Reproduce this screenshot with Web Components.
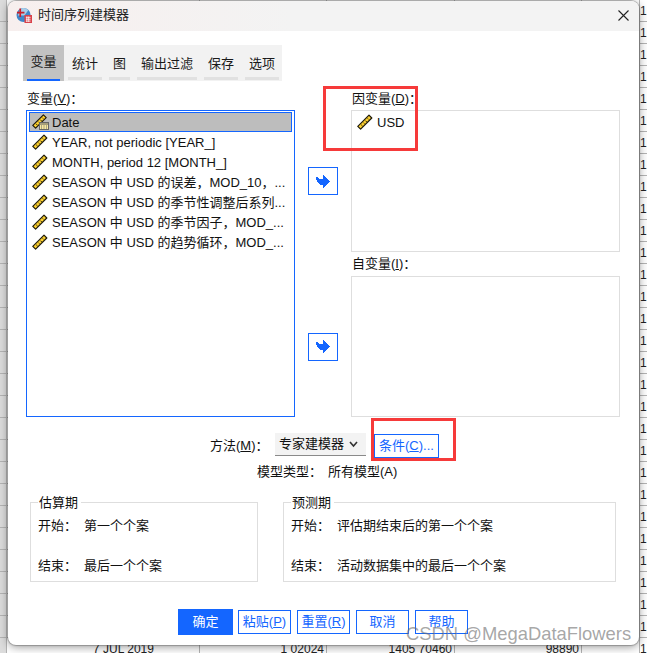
<!DOCTYPE html>
<html lang="zh">
<head>
<meta charset="utf-8">
<title>时间序列建模器</title>
<style>
html,body{margin:0;padding:0;background:#fff;}
body{width:647px;height:653px;overflow:hidden;font:13px/1.2 "Liberation Sans","Noto Sans CJK SC",sans-serif;color:#111;}
</style>
</head>
<body>
<ui-stage>
  <sheet-bg></sheet-bg>
  <dialog-window title-text="时间序列建模器">
    <tab-bar>
      <tab-item active>变量</tab-item><tab-item w="41">统计</tab-item><tab-item w="28">图</tab-item><tab-item w="67">输出过滤</tab-item><tab-item w="41">保存</tab-item><tab-item w="41">选项</tab-item>
    </tab-bar>
    <var-panel>
      <field-label slot="l1">变量(<u>V</u>)：</field-label>
      <list-box slot="list" focus>
        <var-item selected kind="date">Date</var-item>
        <var-item>YEAR, not periodic [YEAR_]</var-item>
        <var-item>MONTH, period 12 [MONTH_]</var-item>
        <var-item>SEASON 中 USD 的误差，MOD_10，...</var-item>
        <var-item>SEASON 中 USD 的季节性调整后系列...</var-item>
        <var-item>SEASON 中 USD 的季节因子，MOD_...</var-item>
        <var-item>SEASON 中 USD 的趋势循环，MOD_...</var-item>
      </list-box>
      <arrow-button slot="a1"></arrow-button>
      <arrow-button slot="a2"></arrow-button>
      <field-label slot="l2">因变量(<u>D</u>)：</field-label>
      <list-box slot="dep"><var-item>USD</var-item></list-box>
      <field-label slot="l3" style="padding-top:4px">自变量(<u>I</u>)：</field-label>
      <list-box slot="ind"></list-box>
    </var-panel>
    <method-row></method-row>
    <period-row>
      <period-box heading="估算期" start="第一个个案" end="最后一个个案" style="width:228px"></period-box>
      <period-box heading="预测期" start="评估期结束后的第一个个案" end="活动数据集中的最后一个个案" style="width:333px"></period-box>
    </period-row>
    <action-row>
      <action-button primary w="55">确定</action-button>
      <action-button w="53">粘贴(<u>P</u>)</action-button>
      <action-button w="53">重置(<u>R</u>)</action-button>
      <action-button w="53">取消</action-button>
      <action-button w="53">帮助</action-button>
    </action-row>
  </dialog-window>
  <mark-rect style="left:323px;top:86px;width:89px;height:59px"></mark-rect>
  <mark-rect style="left:371px;top:418px;width:79px;height:37px"></mark-rect>
  <water-mark>CSDN @MegaDataFlowers</water-mark>
</ui-stage>
<script>
function def(name, css, html){
  customElements.define(name, class extends HTMLElement{
    constructor(){
      super();
      this.attachShadow({mode:'open'});
    }
    connectedCallback(){
      this.shadowRoot.innerHTML='<style>'+css+'</style>'+(typeof html==='function'?html(this):html);
    }
  });
}
const RULER=`<svg width="16" height="16" viewBox="0 0 16 16" style="display:block">
<path d="M.8 12.4 12 1.2 14.8 4 3.6 15.2z" fill="#fbcf2e" stroke="#1e1a0c" stroke-width="1.2" stroke-linejoin="round"/>
<path d="M4.2 10.8l1.4 1.4M6.4 8.6l1 1M8.4 6.6l1.4 1.4M10.6 4.4l1 1" stroke="#1e1a0c" stroke-width=".9" fill="none"/>
</svg>`;
const RULER_DATE=`<svg width="17" height="16" viewBox="0 0 17 16" style="display:block">
<path d="M.8 11.4 11.4.8 14.2 3.6 3.6 14.2z" fill="#fbcf2e" stroke="#1e1a0c" stroke-width="1.2" stroke-linejoin="round"/>
<path d="M4 9.8l1.4 1.4M6.2 7.6l1 1M8.2 5.6l1.4 1.4M10.2 3.6l1 1" stroke="#1e1a0c" stroke-width=".9" fill="none"/>
<rect x="7.5" y="8.5" width="9" height="7" fill="#f8e9a0" stroke="#666"/>
<path d="M8 10h8" stroke="#555"/>
<path d="M9 12h1M11.5 12h1M14 12h1M9 14h1M11.5 14h1M14 14h1" stroke="#666"/>
</svg>`;

def('ui-stage',':host{display:block;position:relative;width:647px;height:653px;overflow:hidden}','<slot></slot>');

def('sheet-bg',`:host{display:block;width:647px;height:653px;overflow:hidden;background:#fff}
.r{display:grid;grid-template-columns:7px 193px 127px 128px 127px 58px 7px;height:22px;box-sizing:border-box;border-bottom:1px solid #b4b4b4;font:12px/20px "Liberation Sans",sans-serif;color:#222}
.c{border-right:1px solid #b4b4b4;white-space:nowrap;overflow:hidden;box-sizing:border-box;padding-top:1px}
.c.n{border-right:0}
.l{background:#dcdcdc}
.t{text-align:right;padding-right:2px}
`,()=>{
  let s='';
  for(let i=0;i<30;i++){
    const last=i===29;
    s+=`<div class="r"><div class="c l"></div><div class="c">${last?'<span style="margin-left:86px">7 JUL 2019</span>':''}</div><div class="c t">${last?'1 02024':''}</div><div class="c t">${last?'1405 70460':''}</div><div class="c t">${last?'98890':''}</div><div class="c"></div><div class="c n">12</div></div>`;
  }
  return s;
});

def('dialog-window',`:host{display:flex;flex-direction:column;position:absolute;left:8px;top:1px;width:631px;height:644px;background:#fff;border-radius:8px;box-shadow:0 0 1px 1px rgba(90,90,90,.45),0 2px 10px rgba(0,0,0,.4);overflow:hidden}
.title{display:flex;align-items:center;height:28px;padding-bottom:2px;flex:none;background:linear-gradient(90deg,#f7efee,#f3f3f3 45%);padding-left:8px;font-size:13px;color:#222}
.ic{margin-right:6px;display:block}
.sp{flex:1}
.x{margin-right:10px;display:block}
.body{display:flex;flex-direction:column;flex:1}`,
(h)=>`<div class="title">
<svg class="ic" width="16" height="16" viewBox="0 0 17 17"><circle cx="8" cy="8.5" r="7.5" fill="#3f86c8"/><path d="M4 2.5a7 7 0 0 1 9 1L9 9 2 9z" fill="#a9cde8"/><path d="M1 6h8M4.5 1.5v9" stroke="#c8202a" stroke-width="1.8"/><rect x="9" y="8.5" width="8" height="8.5" fill="#d8414a"/><path d="M10.5 11h5M10.5 13h5M10.5 15h5M11.5 10v6M13.5 10v6" stroke="#fff" stroke-width=".8"/></svg>
<span>${h.getAttribute('title-text')||''}</span><span class="sp"></span>
<svg class="x" width="11" height="11" viewBox="0 0 11 11"><path d="M.5.5l10 10M10.5.5l-10 10" stroke="#222" stroke-width="1.1"/></svg>
</div><div class="body"><slot></slot></div>`);

def('tab-bar',`:host{display:flex;width:259px;height:36px;margin:14px 0 0 15px;background:#f2f2f2}`,'<slot></slot>');
def('tab-item',`:host{display:flex;position:relative;justify-content:center;box-sizing:border-box;font-size:13px;line-height:16px;color:#1a1a1a;padding:11px 0 0 1px;width:41px}
:host([active]){background:#c2c2c2;padding:9px 0 0}
i{position:absolute;left:4px;right:3px;bottom:1px;height:3px;background:#e1e1e1}
:host([active]) i{left:4px;right:4px;bottom:0;height:2px;background:#1466ff;}`,
(h)=>{ if(h.getAttribute('w')) h.style.width=h.getAttribute('w')+'px'; return '<slot></slot><i></i>';});

def('var-panel',`:host{display:grid;margin:7px 0 0 18px;width:594px;grid-template-columns:269px 30px 269px;column-gap:13px;grid-template-rows:22px 142px 24px 141px}
.l1{grid-area:1/1}.list{grid-area:2/1/5/2;display:grid}.a1{grid-area:2/2;align-self:center}.a2{grid-area:4/2;align-self:center}
.l2{grid-area:1/3}.dep{grid-area:2/3;display:grid}.l3{grid-area:3/3}.ind{grid-area:4/3;display:grid}`,
`<div class="l1"><slot name="l1"></slot></div><div class="list"><slot name="list"></slot></div><div class="a1"><slot name="a1"></slot></div><div class="a2"><slot name="a2"></slot></div><div class="l2"><slot name="l2"></slot></div><div class="dep"><slot name="dep"></slot></div><div class="l3"><slot name="l3"></slot></div><div class="ind"><slot name="ind"></slot></div>`);

def('field-label',`:host{display:block;font-size:13px;line-height:16px;padding:3px 0 0 1px;color:#111}`,'<slot></slot>');
def('list-box',`:host{display:flex;flex-direction:column;box-sizing:border-box;border:1px solid #dedede;padding:1px 2px;background:#fff}
:host([focus]){border-color:#1466ff}`,'<slot></slot>');
def('var-item',`:host{display:flex;align-items:center;height:20px;box-sizing:border-box;font-size:13px;line-height:20px;color:#111;white-space:nowrap;padding:1px 0 0 3px;gap:3px}
:host([selected]){background:#bdbdbd;outline:1px solid #1466ff;outline-offset:-1px}
.i{width:17px;flex:none;margin-top:-1px}`,
(h)=>`<span class="i">${h.getAttribute('kind')==='date'?RULER_DATE:RULER}</span><slot></slot>`);
def('arrow-button',`:host{display:flex;align-items:center;justify-content:center;box-sizing:border-box;width:30px;height:28px;border:1px solid #1466ff;background:#fff}`,
`<svg width="15" height="13" viewBox="0 0 15 13" shape-rendering="crispEdges"><path d="M0 2H2V3H3V4H7V0H8V1H9V2H10V3H11V4H12V5H13V6H14V7H13V8H12V9H11V10H10V11H9V12H8V13H7V10H4V9H3V8H2V7H1V5H0Z" fill="#1466ff"/></svg>`);

def('method-row',`:host{display:block;margin-top:16px;height:64px;position:relative;font-size:13px;color:#111}
.a{display:flex;align-items:stretch;height:24px;padding-left:202px}
.lb{line-height:26px;width:65px}
.sel{display:flex;align-items:center;justify-content:space-between;box-sizing:border-box;width:91px;height:23px;background:#f3f3f3;border-bottom:1px solid #8a8a8a;padding:0 8px 0 4px;margin-right:8px}
.btn{box-sizing:border-box;width:65px;height:24px;margin-top:1px;border:1px solid #1466ff;color:#1466ff;line-height:22px;padding-left:4px}
.b{display:flex;padding-left:249px;margin-top:7px;line-height:16px}
.b span:first-child{width:71px}
u{text-underline-offset:1px}`,
`<div class="a"><span class="lb">方法(<u>M</u>)：</span><span class="sel"><span>专家建模器</span><svg width="9" height="7" viewBox="0 0 9 7"><path d="M1 1l3.5 4L8 1" fill="none" stroke="#333" stroke-width="1.6"/></svg></span><span class="btn">条件(<u>C</u>)...</span></div>
<div class="b"><span>模型类型：</span><span>所有模型(A)</span></div>`);

def('period-row',`:host{display:flex;gap:25px;margin:5px 0 0 22px}`,'<slot></slot>');
def('period-box',`:host{display:block;position:relative;box-sizing:border-box;height:80px;border:1px solid #dedede;font-size:13px;color:#111}
.h{position:absolute;left:7px;top:-8px;background:#fff;padding:0 3px 0 1px;line-height:16px}
.r{display:flex;position:absolute;left:7px;line-height:16px}
.r span:first-child{width:46px}`,
(h)=>`<div class="h">${h.getAttribute('heading')}</div><div class="r" style="top:15px"><span>开始：</span><span>${h.getAttribute('start')}</span></div><div class="r" style="top:55px"><span>结束：</span><span>${h.getAttribute('end')}</span></div>`);

def('action-row',`:host{display:flex;gap:6px;margin:27px 0 0 170px;align-items:flex-start}`,'<slot></slot>');
def('action-button',`:host{display:flex;align-items:center;justify-content:center;box-sizing:border-box;height:24px;margin-top:1px;border:1px solid #1466ff;color:#1466ff;font-size:13px;background:#fff}
:host([primary]){background:#1466ff;color:#fff;height:26px;margin:0 -1px 0 0}`,
(h)=>{ h.style.width=h.getAttribute('w')+'px'; return '<slot></slot>';});

def('mark-rect',`:host{display:block;position:absolute;border:3px solid #f63a3a;pointer-events:none}`,'');
def('water-mark',`:host{display:block;position:absolute;left:406px;top:623px;font:18.4px/22px "Liberation Sans",sans-serif;color:rgba(110,110,110,.62);white-space:nowrap}`,'<slot></slot>');
</script>
</body>
</html>
